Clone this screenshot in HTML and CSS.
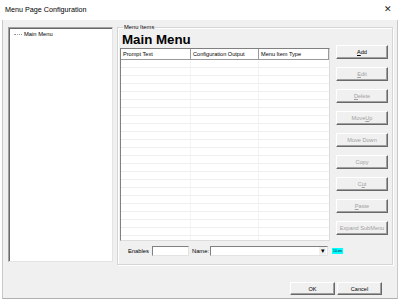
FILE: index.html
```html
<!DOCTYPE html>
<html>
<head>
<meta charset="utf-8">
<link rel="stylesheet" href="styles.css">
</head>
<body>
<div class="window">
  <div class="titlebar">
    <span class="title">Menu Page Configuration</span>
    <span class="close">✕</span>
  </div>
  <div class="body">
    <div class="main">
      <div class="tree">
        <div class="node"><span class="dots"></span>Main Menu</div>
      </div>
      <fieldset class="group">
        <legend>Menu Items</legend>
        <div class="heading">Main Menu</div>
        <div class="content">
          <div class="table">
            <div class="thead">
              <div class="th c1">Prompt Text</div>
              <div class="th c2">Configuration Output</div>
              <div class="th c3">Menu Item Type</div>
            </div>
            <div class="tbody">
              <div class="col c1"></div>
              <div class="col c2"></div>
              <div class="col c3"></div>
            </div>
          </div>
          <div class="buttons">
            <div class="btn"><u>A</u>dd</div>
            <div class="btn dis"><u>E</u>dit</div>
            <div class="btn dis"><u>D</u>elete</div>
            <div class="btn dis">Move <u>U</u>p</div>
            <div class="btn dis">Move Down</div>
            <div class="btn dis">Copy</div>
            <div class="btn dis">C<u>u</u>t</div>
            <div class="btn dis"><u>P</u>aste</div>
            <div class="btn dis">Expand SubMenu</div>
          </div>
        </div>
        <div class="bottom">
          <span class="lbl">Enables</span>
          <span class="input enables"></span>
          <span class="lbl name">Name:</span>
          <span class="input combo"><span class="arrow">▾</span></span>
          <span class="badge">10-en</span>
        </div>
      </fieldset>
    </div>
    <div class="footer">
      <div class="btn dlg">OK</div>
      <div class="btn dlg">Cancel</div>
    </div>
  </div>
</div>
</body>
</html>
```

FILE: styles.css
```css
* { box-sizing: border-box; }
html, body { margin: 0; padding: 0; }
body {
  width: 400px; height: 300px; overflow: hidden;
  font-family: "Liberation Sans", Arial, sans-serif;
  background: #ffffff;
}
.window {
  width: 400px; height: 300px;
  display: flex; flex-direction: column;
}
.titlebar {
  height: 20px; background: #ffffff;
  display: flex; align-items: center; justify-content: space-between;
  padding: 0 8px 2px 5px;
}
.title { font-size: 7.2px; color: #000; }
.close { font-size: 9px; color: #222; }
.body {
  flex: 1; background: #f0f0f0;
  margin: 0 2px 1px 2px;
  border-left: 1px solid #c8c8c8;
  border-right: 1px solid #c8c8c8;
  border-bottom: 1px solid #b0b0b0;
  display: flex; flex-direction: column;
}
.main {
  display: flex; gap: 4px;
  padding: 4px 4px 0 5px;
}
.tree {
  width: 106px; height: 235px; margin-top: 3px;
  background: #fff;
  border-top: 1px solid #a0a0a0;
  border-left: 1px solid #a0a0a0;
  border-right: 1px solid #e3e3e3;
  border-bottom: 1px solid #e3e3e3;
  box-shadow: inset 1px 1px 0 #696969;
  padding: 3px 0 0 5px;
}
.node { font-size: 5.8px; color: #000; display: flex; align-items: center; }
.dots {
  width: 8px; height: 0; border-top: 1px dotted #999; margin-right: 2px;
}
.group {
  flex: 1; margin: 0; height: 241px;
  border: 1px solid #d5d5d5;
  box-shadow: inset 1px 1px 0 #fff, 1px 1px 0 #fff;
  padding: 0 4px 0 2px;
}
.group legend {
  font-size: 5.8px; color: #000; padding: 0 1px; margin-left: 3px;
}
.heading {
  font-size: 13.3px; font-weight: bold; color: #000;
  line-height: 14px; margin: 3px 0 1px 2px;
}
.content { display: flex; gap: 6px; }
.table {
  width: 210px; height: 193px; background: #fff;
  border-left: 1px solid #808080;
  border-top: 1px solid #808080;
  border-right: 1px solid #dcdcdc;
  border-bottom: 1px solid #dcdcdc;
  display: flex; flex-direction: column;
}
.thead { display: flex; height: 11px; border-bottom: 1px solid #9a9a9a; }
.th {
  font-size: 5.6px; color: #000; padding: 2px 0 0 2px;
  border-right: 1px solid #9a9a9a; white-space: nowrap; overflow: hidden;
}
.c1 { width: 70px; }
.c2 { width: 68px; }
.c3 { flex: 1; }
.tbody {
  flex: 1; display: flex;
  background-image: repeating-linear-gradient(to bottom, transparent 0, transparent 7px, #efefef 7px, #efefef 8px);
}
.col { border-right: 1px solid #f3f3f3; }
.col.c3 { border-right: none; }
.buttons {
  display: flex; flex-direction: column; gap: 8px; margin-top: -3px;
}
.btn {
  width: 52px; height: 14px;
  display: flex; align-items: center; justify-content: center;
  font-size: 5.6px; color: #000;
  background: #f0f0f0;
  border-top: 1px solid #fff;
  border-left: 1px solid #fff;
  border-right: 1px solid #696969;
  border-bottom: 1px solid #696969;
  box-shadow: inset -1px -1px 0 #a0a0a0;
  white-space: nowrap;
}
.btn u { text-decoration: underline; }
.btn.dis { color: #a0a0a0; }
.bottom {
  display: flex; align-items: center; height: 12px; margin-top: 4px;
  padding-left: 8px;
}
.lbl { font-size: 5.8px; color: #000; }
.lbl.name { margin-left: 3px; margin-right: 1px; }
.input {
  height: 10px; background: #fff;
  border-top: 1px solid #808080; border-left: 1px solid #808080;
  border-right: 1px solid #e3e3e3; border-bottom: 1px solid #e3e3e3;
}
.enables { width: 37px; margin-left: 3px; }
.combo { width: 118px; position: relative; }
.arrow {
  position: absolute; right: 1px; top: 0px;
  font-size: 7px; line-height: 8px; color: #000;
  width: 7px; text-align: center; background: #f0f0f0;
}
.badge {
  margin-left: 4px; background: #00ffff; color: #003;
  font-size: 3.5px; height: 6px; line-height: 6px; padding: 0 1px;
}
.footer {
  display: flex; justify-content: flex-end; gap: 2px;
  padding: 17px 15px 0 0;
}
.btn.dlg { width: 45px; height: 13px; }
```
